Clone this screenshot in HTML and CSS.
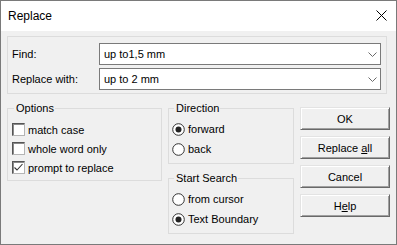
FILE: index.html
```html
<!DOCTYPE html>
<html lang="en">

<head>
    <meta charset="UTF-8">
    <title>Replace</title>
    <link rel="stylesheet" href="styles.css">
</head>

<body>
    <div class="dialog">
        <div class="titlebar">
            <span class="title">Replace</span>
            <span class="close">
                <svg width="11" height="11" viewBox="0 0 11 11"><path d="M0.5 0.5L10.5 10.5M10.5 0.5L0.5 10.5" stroke="#000" stroke-width="1" fill="none"/></svg>
            </span>
        </div>

        <div class="content">
            <div class="search-box">
                <label>Find:</label>
                <div class="combo">
                    <span>up to1,5 mm</span>
                    <svg width="9" height="5" viewBox="0 0 9 5"><path d="M0.5 0.5L4.5 4.5L8.5 0.5" stroke="#6a6a6a" stroke-width="1" fill="none"/></svg>
                </div>
                <label>Replace with:</label>
                <div class="combo">
                    <span>up to 2 mm</span>
                    <svg width="9" height="5" viewBox="0 0 9 5"><path d="M0.5 0.5L4.5 4.5L8.5 0.5" stroke="#6a6a6a" stroke-width="1" fill="none"/></svg>
                </div>
            </div>

            <div class="lower">
                <fieldset class="group options">
                    <legend>Options</legend>
                    <div class="check-row"><span class="checkbox"></span>match case</div>
                    <div class="check-row"><span class="checkbox"></span>whole word only</div>
                    <div class="check-row">
                        <span class="checkbox">
                            <svg width="11" height="11" viewBox="0 0 11 11"><path d="M1.5 5.5L4 8L9.5 2" stroke="#333" stroke-width="1.1" fill="none"/></svg>
                        </span>prompt to replace
                    </div>
                </fieldset>

                <div class="middle">
                    <fieldset class="group direction">
                        <legend>Direction</legend>
                        <div class="radio-row">
                            <svg class="radio" width="13" height="13" viewBox="0 0 13 13"><circle cx="6.5" cy="6.5" r="5.8" fill="#fff" stroke="#333"/><circle cx="6.5" cy="6.5" r="3" fill="#222"/></svg>forward
                        </div>
                        <div class="radio-row">
                            <svg class="radio" width="13" height="13" viewBox="0 0 13 13"><circle cx="6.5" cy="6.5" r="5.8" fill="#fff" stroke="#333"/></svg>back
                        </div>
                    </fieldset>

                    <fieldset class="group start-search">
                        <legend>Start Search</legend>
                        <div class="radio-row">
                            <svg class="radio" width="13" height="13" viewBox="0 0 13 13"><circle cx="6.5" cy="6.5" r="5.8" fill="#fff" stroke="#333"/></svg>from cursor
                        </div>
                        <div class="radio-row">
                            <svg class="radio" width="13" height="13" viewBox="0 0 13 13"><circle cx="6.5" cy="6.5" r="5.8" fill="#fff" stroke="#333"/><circle cx="6.5" cy="6.5" r="3" fill="#222"/></svg>Text Boundary
                        </div>
                    </fieldset>
                </div>

                <div class="buttons">
                    <button>OK</button>
                    <button>Replace <u>a</u>ll</button>
                    <button>Cancel</button>
                    <button>H<u>e</u>lp</button>
                </div>
            </div>
        </div>
    </div>
</body>

</html>
```

FILE: styles.css
```css
body,
html {
    margin: 0;
    padding: 0;
    overflow: hidden;
}

body {
    font-family: "Liberation Sans", Arial, sans-serif;
    font-size: 11px;
    color: #000;
}

.dialog {
    width: 397px;
    height: 245px;
    box-sizing: border-box;
    border: 1px solid #7a7a7a;
    background: #f0f0f0;
    display: flex;
    flex-direction: column;
}

.titlebar {
    height: 30px;
    flex-shrink: 0;
    background: #fff;
    display: flex;
    align-items: center;
}

.title {
    flex: 1;
    padding-left: 7px;
    font-size: 12px;
}

.close {
    align-self: flex-start;
    margin-top: 9px;
    margin-right: 9px;
    line-height: 0;
}

.content {
    padding: 5px 6px 0 6px;
}

.search-box {
    width: 380px;
    box-sizing: border-box;
    border: 1px solid #dcdcdc;
    padding: 6px 5px 3px 4px;
    display: grid;
    grid-template-columns: 87px 1fr;
    row-gap: 3px;
    align-items: center;
}

.combo {
    height: 22px;
    box-sizing: border-box;
    background: #fff;
    border: 1px solid #7a7a7a;
    padding: 0 3px 0 4px;
    display: flex;
    align-items: center;
    justify-content: space-between;
}

.lower {
    margin-top: 8px;
    display: flex;
    align-items: flex-start;
    gap: 6px;
}

.group {
    margin: 0;
    border: 1px solid #dcdcdc;
    min-width: 0;
    box-sizing: border-box;
}

.group legend {
    padding: 0 1px 0 2px;
    margin-left: 2px;
    font-size: 11px;
    line-height: 13px;
}

.options {
    width: 155px;
    padding: 5px 4px 3px 4px;
}

.check-row {
    height: 19px;
    display: flex;
    align-items: center;
    gap: 3px;
}

.checkbox {
    width: 13px;
    height: 13px;
    box-sizing: border-box;
    background: #fff;
    border: 1px solid;
    border-color: #555 #b4b4b4 #b4b4b4 #555;
    box-shadow: inset 1px 1px #8a8a8a;
    display: flex;
    align-items: center;
    justify-content: center;
}

.checkbox svg {
    display: block;
}

.middle {
    width: 126px;
    display: flex;
    flex-direction: column;
    gap: 8px;
}

.direction,
.start-search {
    padding: 4px 3px 4px 3px;
}

.radio-row {
    height: 20px;
    display: flex;
    align-items: center;
    gap: 3px;
}

.radio {
    display: block;
    flex-shrink: 0;
}

.buttons {
    width: 90px;
    padding-top: 5px;
    display: flex;
    flex-direction: column;
    gap: 6px;
}

button {
    height: 23px;
    margin: 0;
    padding: 0;
    font-family: "Liberation Sans", Arial, sans-serif;
    font-size: 11px;
    color: #000;
    background: #f0f0f0;
    border: 1px solid;
    border-color: #e3e3e3 #696969 #696969 #e3e3e3;
    box-shadow: inset 1px 1px #fff, inset -1px -1px #a0a0a0;
}
```
